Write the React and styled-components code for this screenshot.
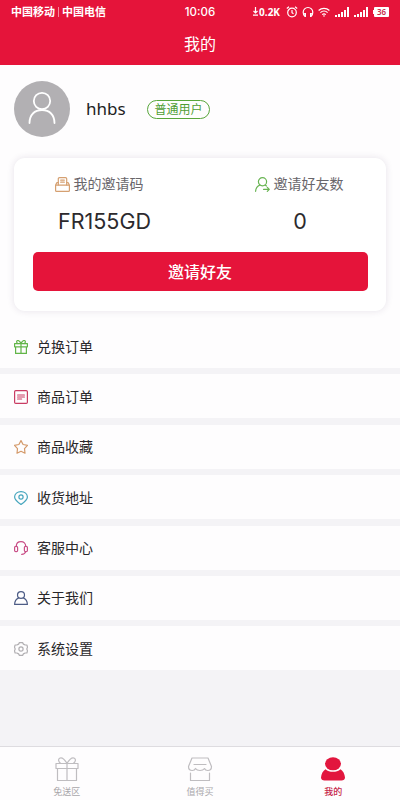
import styled, { createGlobalStyle } from "styled-components";

const GlobalStyle = createGlobalStyle`
  * {
    box-sizing: border-box;
  }
  body {
    margin: 0;
    background: #f4f3f6;
    font-family: "Noto Sans", "Noto Sans CJK SC", sans-serif;
  }
`;
const Page = styled.div`
  height: 800px;
  display: flex;
  flex-direction: column;
  background: #f4f3f6;
  overflow: hidden;
`;
const StatusBar = styled.div`
  height: 23px;
  flex: none;
  display: grid;
  grid-template-columns: 1fr auto 1fr;
  align-items: center;
  padding: 0 11px;
  background: #e5143a;
  color: #fff;
`;
const Carriers = styled.div`
  display: flex;
  align-items: center;
  font-size: 11px;
  line-height: 16px;
  font-weight: 600;
`;
const Divider = styled.span`
  width: 1px;
  height: 10px;
  margin: 0 3px;
  background: #f58a9d;
`;
const Clock = styled.div`
  font-family: Inter, sans-serif;
  font-size: 11.5px;
  line-height: 16px;
  font-weight: 500;
`;
const StatusIcons = styled.div`
  display: flex;
  align-items: center;
  justify-content: flex-end;
`;
const Speed = styled.span`
  display: flex;
  align-items: center;
  gap: 1px;
  margin-right: 6px;
  font-size: 10px;
  line-height: 16px;
  font-weight: 700;
`;
const StatusIcon = styled.svg`
  flex: none;
  width: ${(props) => props.$w}px;
  height: ${(props) => props.$h || 12}px;
  margin-right: ${(props) => props.$gap || 0}px;
  fill: none;
  stroke: currentColor;
  stroke-width: 1.2;
`;
const Battery = styled.span`
  position: relative;
  width: 15px;
  height: 10px;
  border-radius: 1px;
  background: #fff;
  color: #c92c4b;
  font-size: 8px;
  line-height: 10px;
  font-weight: 600;
  text-align: center;

  &::before {
    content: "";
    position: absolute;
    left: -1px;
    top: 3px;
    width: 1px;
    height: 4px;
    background: #fff;
  }
`;
const Header = styled.h1`
  height: 42px;
  flex: none;
  margin: 0;
  background: #e5143a;
  color: #fff;
  font-size: 16px;
  line-height: 42px;
  font-weight: 400;
  text-align: center;
`;
const Profile = styled.section`
  height: 259px;
  flex: none;
  padding: 16px 14px 0;
  background: #fefdfe;
`;
const UserRow = styled.div`
  height: 56px;
  display: flex;
  align-items: center;
`;
const Avatar = styled.div`
  width: 56px;
  height: 56px;
  border-radius: 50%;
  background: #b2b0b3;
`;
const UserName = styled.span`
  width: 61px;
  margin-left: 16px;
  font-size: 17px;
  line-height: 24px;
  color: #222;
`;
const Badge = styled.span`
  width: 63px;
  height: 19px;
  border: 1px solid #58a63b;
  border-radius: 10px;
  color: #4f9e35;
  font-size: 12px;
  line-height: 18px;
  text-align: center;
`;
const Card = styled.div`
  height: 153px;
  margin-top: 21px;
  padding: 16px 18.5px 0;
  border-radius: 11px;
  background: #fff;
  box-shadow: 0 0 7px rgba(70, 50, 90, 0.13);
`;
const Stats = styled.div`
  display: flex;
  justify-content: space-between;
`;
const Stat = styled.div`
  width: ${(props) => props.$width}px;
`;
const StatLabel = styled.div`
  display: flex;
  align-items: center;
  justify-content: center;
  gap: 4px;
  height: 20px;
  margin-left: ${(props) => props.$shift || 0}px;
  font-size: 14px;
  line-height: 20px;
  color: #69666b;
`;
const StatValue = styled.div`
  height: 30px;
  margin-top: 12px;
  font-family: Inter, "Noto Sans", sans-serif;
  font-size: 21.5px;
  line-height: 30px;
  color: #2c2a2d;
  text-align: center;
`;
const InviteButton = styled.button`
  display: block;
  width: 100%;
  height: 39px;
  margin-top: 16px;
  padding: 1px 0 0;
  border: 0;
  border-radius: 5px;
  background: #e5143a;
  color: #fff;
  font-family: inherit;
  font-size: 16px;
  line-height: 38px;
  font-weight: 500;
`;
const Menu = styled.nav`
  display: flex;
  flex-direction: column;
  gap: 6.4px;
`;
const MenuRow = styled.div`
  height: 44px;
  display: flex;
  align-items: center;
  gap: 9px;
  padding: 1px 0 0 14px;
  background: #fefdfe;
  color: #29272a;
  font-size: 14px;
  line-height: 20px;
`;
const Icon = styled.svg`
  flex: none;
  width: ${(props) => props.$size || 14}px;
  height: ${(props) => props.$size || 14}px;
  color: ${(props) => props.$color};
  fill: none;
  stroke: currentColor;
  stroke-width: ${(props) => props.$stroke || 1.2};
  stroke-linejoin: round;
  stroke-linecap: round;
`;
const TabBar = styled.footer`
  height: 54px;
  flex: none;
  margin-top: auto;
  display: grid;
  grid-template-columns: repeat(3, 1fr);
  border-top: 1px solid #dedce0;
  background: #fefdfe;
`;
const Tab = styled.div`
  display: flex;
  flex-direction: column;
  align-items: center;
  padding-top: 9px;
  color: ${(props) => (props.$active ? "#c6254a" : "#a9a7aa")};
  font-size: 9px;
  line-height: 14px;
  font-weight: ${(props) => (props.$active ? 500 : 400)};
`;
const TabIcon = styled.svg`
  width: 26px;
  height: 26px;
  margin-bottom: 3px;
  fill: none;
  stroke: #bfbdc0;
  stroke-width: 1.2;
  stroke-linejoin: round;
  stroke-linecap: round;
`;

const menu = [
  {
    label: "兑换订单",
    color: "#62b548",
    art: (
      <>
        <path d="M.6 3.6h12.8v3.2H.6zM1.6 6.8v6.6h10.8V6.8M7 3.6v9.8" />
        <path d="M7 3.4C5.8 1.2 4.2.2 3.2.7c-1 .6-.6 2 .6 2.9M7 3.4C8.2 1.2 9.8.2 10.800.7c1 .6.6 2-.6 2.900" />
      </>
    ),
  },
  {
    label: "商品订单",
    color: "#c93c63",
    art: (
      <>
        <rect x=".6" y=".6" width="12.8" height="12.8" rx="1.2" />
        <path d="M3.6 5h6.800M3.6 7h6.800M3.6 9h4" />
      </>
    ),
  },
  {
    label: "商品收藏",
    color: "#d49a6a",
    art: <path d="M7 .6l2.100 3.900 4.400.8-3 3.300.5 4.600L7 11.300l-4 1.900.5-4.600-3-3.300 4.400-.8z" />,
  },
  {
    label: "收货地址",
    color: "#45a5bd",
    art: (
      <>
        <path d="M7 13.5C3.4 10.9.6 8.8.6 5.900.6 2.900 3.300.6 7 .6s6.400 2.300 6.400 5.300c0 2.900-2.800 5-6.400 7.600z" />
        <circle cx="7" cy="6" r="2.1" />
      </>
    ),
  },
  {
    label: "客服中心",
    color: "#c94f87",
    art: (
      <>
        <path d="M2.3 5.4C2.3 2.4 4.2.7 7 .7s4.700 1.700 4.700 4.700M11.700 10.600c-.5 1.800-1.800 2.700-4 2.800" />
        <rect x=".6" y="5.4" width="3" height="5.2" rx="1.2" />
        <rect x="10.4" y="5.4" width="3" height="5.2" rx="1.2" />
      </>
    ),
  },
  {
    label: "关于我们",
    color: "#4d5c86",
    art: (
      <>
        <ellipse cx="7" cy="4" rx="3.5" ry="3.4" />
        <path d="M4.600 6.900C2.300 7.900.7 10 .6 13.400h12.800c-.1-3.400-1.700-5.500-4-6.500" />
      </>
    ),
  },
  {
    label: "系统设置",
    color: "#b1afb2",
    art: (
      <>
        <path d="M5.400.6h3.200l.8 1.500 1.800.9 1.700 0 .6 2.200-.7 1.800.7 1.800-.6 2.200h-1.700l-1.800.9-.8 1.500H5.400l-.8-1.500-1.800-.9H1.100L.5 8.800 1.200 7 .5 5.200 1.100 3h1.700l1.800-.9z" />
        <circle cx="7" cy="7" r="2.1" />
      </>
    ),
  },
];

const Signal = ({ gap }) => (
  <StatusIcon $w={15} $h={10} $gap={gap} viewBox="0 0 15 10">
    <path
      d="M0 8h2v2H0zM3 7h2v3H3zM6 5h2v5H6zM9 3h2v7H9zM12 0h2v10h-2z"
      fill="currentColor"
      stroke="none"
    />
  </StatusIcon>
);

const App = () => {
  return (
    <Page>
      <GlobalStyle />
      <StatusBar>
        <Carriers>
          中国移动
          <Divider />
          中国电信
        </Carriers>
        <Clock>10:06</Clock>
        <StatusIcons>
          <Speed>
            <StatusIcon $w={5} $h={9} viewBox="0 0 5 9">
              <path d="M2.5 0v6M.5 4l2 2 2-2M0 8.2h5" />
            </StatusIcon>
            0.2K
          </Speed>
          <StatusIcon $w={12} $gap={4} viewBox="0 0 12 12">
            <circle cx="6" cy="6.5" r="4.3" />
            <path d="M6 4v2.7l1.5 1M.8 2.4L3 .8M11.2 2.4L9 .8" />
          </StatusIcon>
          <StatusIcon $w={12} $gap={4} viewBox="0 0 12 12">
            <path d="M3 10.5C1.7 9.3 1.2 8 1.2 6.3a4.8 4.8 0 019.6 0c0 1.7-.5 3-1.8 4.2" />
            <path d="M2 7h2v4H3zM8 7h2l-1 4H8z" fill="currentColor" stroke="none" />
          </StatusIcon>
          <StatusIcon $w={12} $gap={5} viewBox="0 0 12 12">
            <path d="M.6 4.5a8 8 0 0110.8 0M2.4 6.6a5.4 5.4 0 017.2 0M4.2 8.6a2.8 2.8 0 013.6 0" />
            <path d="M4.8 9.4h2.4L6 11z" fill="currentColor" stroke="none" />
          </StatusIcon>
          <Signal gap={4} />
          <Signal gap={5} />
          <Battery>36</Battery>
        </StatusIcons>
      </StatusBar>
      <Header>我的</Header>

      <Profile>
        <UserRow>
          <Avatar>
            <Icon $size={56} $color="#fff" $stroke={1.8} viewBox="0 0 56 56">
              <circle cx="28" cy="20" r="8.2" />
              <path d="M15.5 42c0-8 5-13 12.5-13s12.5 5 12.5 13" />
            </Icon>
          </Avatar>
          <UserName>hhbs</UserName>
          <Badge>普通用户</Badge>
        </UserRow>
        <Card>
          <Stats>
            <Stat $width={144}>
              <StatLabel $shift={-11}>
                <Icon $size={15} $color="#d5a071" viewBox="0 0 15 15">
                  <path d="M3.3 8V1.8C3.3 1 3.8.6 4.500.6h6c.7 0 1.200.4 1.200 1.200V8M5.700 3.200h3.600M5.700 5.200h3.600" />
                  <path d="M3.300 5.700H1.800L.6 8v5.500c0 .5.4.9.9.9h12c.5 0 .9-.4.9-.9V8l-1.200-2.300h-1.500M.6 8.200h13.800" />
                </Icon>
                我的邀请码
              </StatLabel>
              <StatValue>FR155GD</StatValue>
            </Stat>
            <Stat $width={135}>
              <StatLabel $shift={-2}>
                <Icon $size={15} $color="#68b452" viewBox="0 0 15 15">
                  <circle cx="7.5" cy="4.7" r="4.1" />
                  <path d="M5 8C2.3 9 .8 11 .6 14.3M10 8l1.500 1M8.500 12.300h5.800M12.300 10.300l2 2-2 2" />
                </Icon>
                邀请好友数
              </StatLabel>
              <StatValue>0</StatValue>
            </Stat>
          </Stats>
          <InviteButton>邀请好友</InviteButton>
        </Card>
      </Profile>

      <Menu>
        {menu.map((item) => (
          <MenuRow key={item.label}>
            <Icon $color={item.color} viewBox="0 0 14 14">
              {item.art}
            </Icon>
            {item.label}
          </MenuRow>
        ))}
      </Menu>

      <TabBar>
        <Tab>
          <TabIcon viewBox="0 0 26 26">
            <path d="M2 7.5h22v5H2zM3.5 12.5v12h19v-12M13 7.5v17" />
            <path d="M13 7.3C10.5 3.3 7.5 1.2 5.6 2.2 3.8 3.3 4.6 6 6.5 7.3M13 7.3c2.5-4 5.5-6.1 7.4-5.1 1.8 1.1 1 3.8-.9 5.1" />
          </TabIcon>
          免送区
        </Tab>
        <Tab>
          <TabIcon viewBox="0 0 26 26">
            <path d="M5 2h16l3.500 8.500c0 2.500-1.800 4-3.800 4-1.500 0-2.700-.8-3.200-2-.8 1.200-2.500 2-4.500 2s-3.700-.8-4.500-2c-.5 1.200-1.700 2-3.200 2-2 0-3.800-1.500-3.800-4zM7 8.500h12M3.500 17v7.500h19V17" />
          </TabIcon>
          值得买
        </Tab>
        <Tab $active>
          <TabIcon viewBox="0 0 26 26">
            <g fill="#e2163e" stroke="none">
              <ellipse cx="13" cy="7.800" rx="8" ry="6.500" />
              <path d="M5.500 13.200c2 1.800 4.600 2.600 7.500 2.600s5.500-.8 7.500-2.600c2.500 1.500 4.200 4.600 4.500 8.300 0 2-1.500 3-3.500 3h-17c-2 0-3.500-1-3.500-3 .3-3.700 2-6.800 4.500-8.300z" />
            </g>
          </TabIcon>
          我的
        </Tab>
      </TabBar>
    </Page>
  );
};

export default App;
